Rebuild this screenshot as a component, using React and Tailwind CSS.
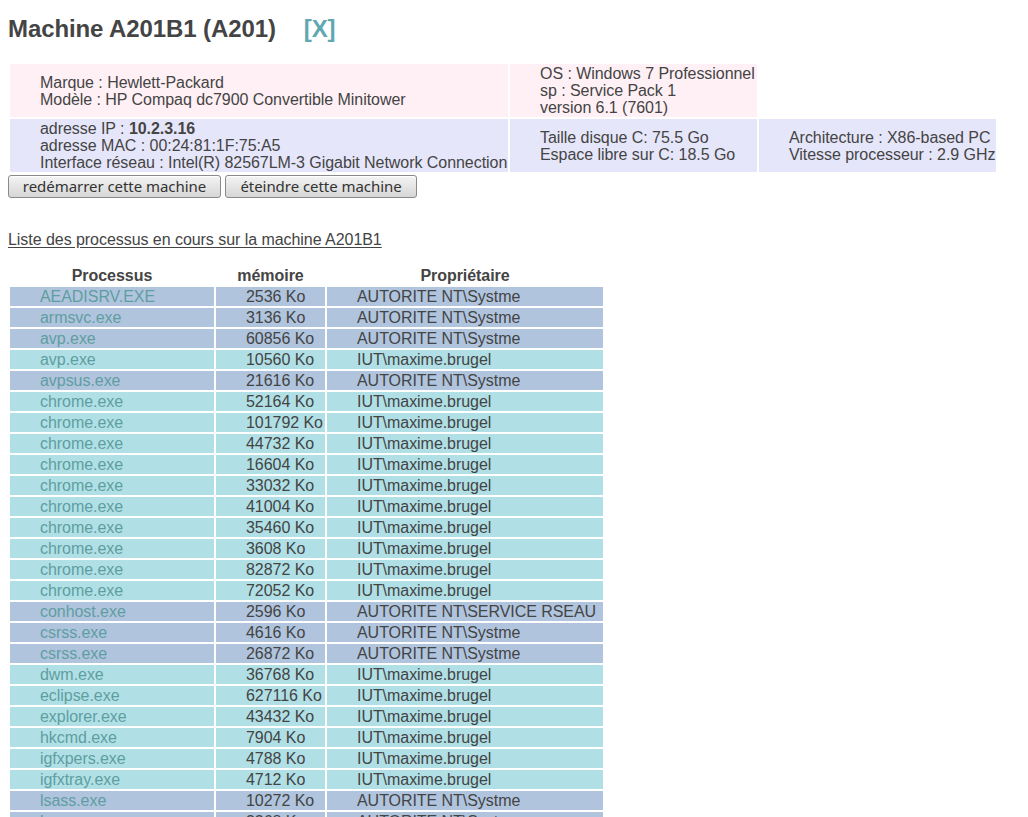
import React from 'react';

const processes = [
  ['AEADISRV.EXE', '2536 Ko', 'AUTORITE NT\\Systme'],
  ['armsvc.exe', '3136 Ko', 'AUTORITE NT\\Systme'],
  ['avp.exe', '60856 Ko', 'AUTORITE NT\\Systme'],
  ['avp.exe', '10560 Ko', 'IUT\\maxime.brugel'],
  ['avpsus.exe', '21616 Ko', 'AUTORITE NT\\Systme'],
  ['chrome.exe', '52164 Ko', 'IUT\\maxime.brugel'],
  ['chrome.exe', '101792 Ko', 'IUT\\maxime.brugel'],
  ['chrome.exe', '44732 Ko', 'IUT\\maxime.brugel'],
  ['chrome.exe', '16604 Ko', 'IUT\\maxime.brugel'],
  ['chrome.exe', '33032 Ko', 'IUT\\maxime.brugel'],
  ['chrome.exe', '41004 Ko', 'IUT\\maxime.brugel'],
  ['chrome.exe', '35460 Ko', 'IUT\\maxime.brugel'],
  ['chrome.exe', '3608 Ko', 'IUT\\maxime.brugel'],
  ['chrome.exe', '82872 Ko', 'IUT\\maxime.brugel'],
  ['chrome.exe', '72052 Ko', 'IUT\\maxime.brugel'],
  ['conhost.exe', '2596 Ko', 'AUTORITE NT\\SERVICE RSEAU'],
  ['csrss.exe', '4616 Ko', 'AUTORITE NT\\Systme'],
  ['csrss.exe', '26872 Ko', 'AUTORITE NT\\Systme'],
  ['dwm.exe', '36768 Ko', 'IUT\\maxime.brugel'],
  ['eclipse.exe', '627116 Ko', 'IUT\\maxime.brugel'],
  ['explorer.exe', '43432 Ko', 'IUT\\maxime.brugel'],
  ['hkcmd.exe', '7904 Ko', 'IUT\\maxime.brugel'],
  ['igfxpers.exe', '4788 Ko', 'IUT\\maxime.brugel'],
  ['igfxtray.exe', '4712 Ko', 'IUT\\maxime.brugel'],
  ['lsass.exe', '10272 Ko', 'AUTORITE NT\\Systme'],
  ['lsm.exe', '3368 Ko', 'AUTORITE NT\\Systme'],
];

const cell = 'pl-[30px] py-px align-middle whitespace-nowrap';

function Button({ children, width }) {
  return (
    <button
      className={`h-[23px] ${width} rounded-[3px] border border-[#8a8a8a] bg-gradient-to-b from-[#f4f4f4] to-[#d6d6d6] text-[15px] leading-none text-[#333] shadow-[inset_0_1px_0_#fff]`}
      style={{ fontFamily: '"Noto Sans", sans-serif' }}
    >
      {children}
    </button>
  );
}

export default function App() {
  return (
    <div className="min-h-screen bg-white text-[#444] text-[16px] leading-[17px] tracking-[-0.05px] px-2" style={{ fontFamily: '"Liberation Sans", Arial, sans-serif' }}>
      {/* Titre */}
      <h2 className="pt-[15px] pb-[19px] text-[24px] leading-[28px] font-bold tracking-[-0.1px] text-[#444]">
        Machine A201B1 (A201)
        <a href="#" className="ml-[28px] font-bold text-[#5fa8b2]">[X]</a>
      </h2>

      {/* Infos machine */}
      <table className="table-fixed border-separate border-spacing-[2px] w-[990px]">
        <colgroup>
          <col className="w-[498px]" />
          <col className="w-[247px]" />
          <col className="w-[237px]" />
        </colgroup>
        <tbody>
          <tr>
            <td className={`${cell} bg-[#fff0f5]`}>
              Marque : Hewlett-Packard<br />
              Modèle : HP Compaq dc7900 Convertible Minitower
            </td>
            <td className={`${cell} bg-[#fff0f5]`}>
              OS : Windows 7 Professionnel<br />
              sp : Service Pack 1<br />
              version 6.1 (7601)
            </td>
          </tr>
          <tr>
            <td className={`${cell} bg-[#e6e6fa]`}>
              adresse IP : <b>10.2.3.16</b><br />
              adresse MAC : 00:24:81:1F:75:A5<br />
              Interface réseau : Intel(R) 82567LM-3 Gigabit Network Connection
            </td>
            <td className={`${cell} bg-[#e6e6fa]`}>
              Taille disque C: 75.5 Go<br />
              Espace libre sur C: 18.5 Go
            </td>
            <td className={`${cell} bg-[#e6e6fa]`}>
              Architecture : X86-based PC<br />
              Vitesse processeur : 2.9 GHz
            </td>
          </tr>
        </tbody>
      </table>

      {/* Actions */}
      <div className="flex gap-1 mt-px">
        <Button width="w-[213px]">redémarrer cette machine</Button>
        <Button width="w-[192px]">éteindre cette machine</Button>
      </div>

      <p className="mt-[33px]">
        <a href="#" className="underline underline-offset-2 leading-[18px] text-[#444]">
          Liste des processus en cours sur la machine A201B1
        </a>
      </p>

      {/* Processus */}
      <table className="table-fixed border-separate border-spacing-[2px] w-[597px] mt-[15px]">
        <colgroup>
          <col className="w-[204px]" />
          <col className="w-[109px]" />
          <col className="w-[276px]" />
        </colgroup>
        <thead>
          <tr>
            <th className="py-px font-bold text-center">Processus</th>
            <th className="py-px font-bold text-center">mémoire</th>
            <th className="py-px font-bold text-center">Propriétaire</th>
          </tr>
        </thead>
        <tbody>
          {processes.map(([name, mem, owner], i) => {
            const bg = owner.startsWith('IUT') ? 'bg-[#b0e0e6]' : 'bg-[#b0c4de]';
            return (
              <tr key={i}>
                <td className={`${cell} ${bg} text-[#5f9ea0]`}>{name}</td>
                <td className={`${cell} ${bg}`}>{mem}</td>
                <td className={`${cell} ${bg}`}>{owner}</td>
              </tr>
            );
          })}
        </tbody>
      </table>
    </div>
  );
}
